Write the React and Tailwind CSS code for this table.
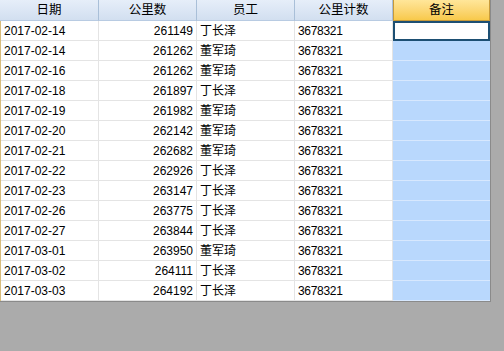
import React from "react";

const rows = [
  ["2017-02-14", "261149", "丁长泽"],
  ["2017-02-14", "261262", "董军琦"],
  ["2017-02-16", "261262", "董军琦"],
  ["2017-02-18", "261897", "丁长泽"],
  ["2017-02-19", "261982", "董军琦"],
  ["2017-02-20", "262142", "董军琦"],
  ["2017-02-21", "262682", "董军琦"],
  ["2017-02-22", "262926", "丁长泽"],
  ["2017-02-23", "263147", "丁长泽"],
  ["2017-02-26", "263775", "丁长泽"],
  ["2017-02-27", "263844", "丁长泽"],
  ["2017-03-01", "263950", "董军琦"],
  ["2017-03-02", "264111", "丁长泽"],
  ["2017-03-03", "264192", "丁长泽"],
];

const font = {
  fontFamily: '"Liberation Sans", "Noto Sans CJK SC", sans-serif',
};

function HeaderCell({ children, w = "w-[98px]" }) {
  return (
    <div className={`${w} h-[21px] flex items-center justify-center border-r border-r-[#a9bfd8] border-b border-b-[#b8cbe2] bg-gradient-to-b from-[#e6eef9] to-[#d2dff0] text-[12.5px] text-black`}>
      {children}
    </div>
  );
}

export default function App() {
  return (
    <div className="w-[504px] h-[351px] bg-[#ababab] overflow-hidden" style={font}>
      <div className="w-[491px] border-r border-b border-[#8a8a8a] bg-white">
        <div className="flex">
          <HeaderCell w="w-[99px]">日期</HeaderCell>
          <HeaderCell>公里数</HeaderCell>
          <HeaderCell>员工</HeaderCell>
          <HeaderCell>公里计数</HeaderCell>
          <div className="w-[97px] h-[21px] flex items-center justify-center border-x border-[#c79a3a] border-b border-b-[#c79a3a] bg-gradient-to-b from-[#ffe699] to-[#f8c94a] text-[12.5px] text-black">
            备注
          </div>
        </div>
        <div className="border-l border-l-[#d8bc7c]">
          {rows.map((r, i) => (
            <div key={i} className="flex h-[20px] text-[12px] text-black">
              <div className="w-[98px] flex items-center pl-[3px] border-r border-b border-[#e4e4e4]">
                {r[0]}
              </div>
              <div className="w-[98px] flex items-center justify-end pr-[3px] border-r border-b border-[#e4e4e4]">
                {r[1]}
              </div>
              <div className="w-[98px] flex items-center pl-[3px] border-r border-b border-[#e4e4e4]">
                {r[2]}
              </div>
              <div className="w-[98px] flex items-center pl-[3px] border-r border-b border-[#e4e4e4] tracking-[-0.3px]">
                3678321
              </div>
              {i === 0 ? (
                <div className="w-[97px] bg-white border-2 border-[#1d4f73]" />
              ) : (
                <div className="w-[97px] bg-[#b9d8fd] border-b border-[#d7e8fe]" />
              )}
            </div>
          ))}
        </div>
      </div>
    </div>
  );
}
